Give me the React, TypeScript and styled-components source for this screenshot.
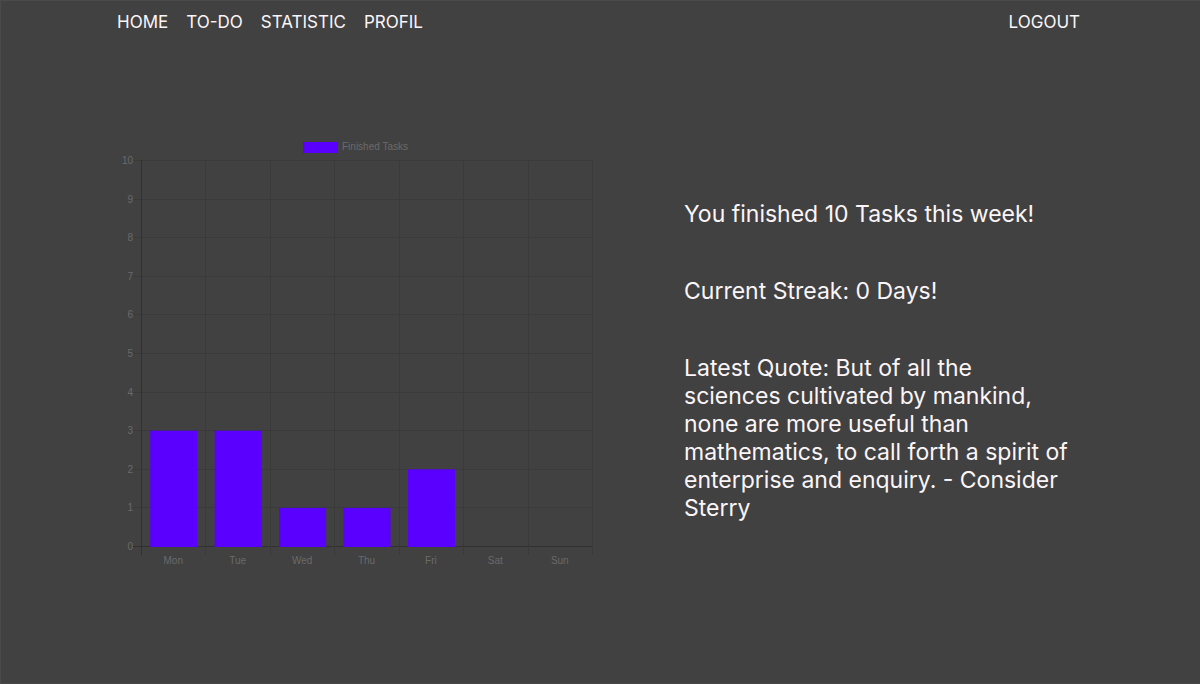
import React from "react";
import styled, { createGlobalStyle } from "styled-components";

const GlobalStyle = createGlobalStyle`
  *, *::before, *::after { box-sizing: border-box; }
  body {
    margin: 0;
    background: #414141;
    color: #fbf5f7;
    font-family: Inter, "Liberation Sans", sans-serif;
    font-weight: 400;
  }
`;

const Page = styled.div`
  min-height: 100vh;
  border: 1px solid #4a4a4a;
  border-right: 0;
  border-bottom-color: #484848;
`;

const Header = styled.header`
  display: flex;
  justify-content: space-between;
  padding: 8px 120px 0 116px;
`;

const Nav = styled.nav`
  display: flex;
  gap: 18px;
`;

const NavLink = styled.a`
  color: inherit;
  font-size: 17px;
  line-height: 26px;
  text-decoration: none;
`;

const LogoutButton = styled.button`
  padding: 0;
  border: 0;
  background: none;
  color: inherit;
  font-family: inherit;
  font-weight: inherit;
  font-size: 17px;
  line-height: 26px;
  cursor: pointer;
`;

const Main = styled.main`
  display: grid;
  grid-template-columns: 40fr 33fr;
  column-gap: 87px;
  align-items: start;
  padding: 102px 120px 0 116px;
`;

const Chart = styled.svg`
  display: block;
  width: 100%;
  height: auto;
  font-family: "Liberation Sans", Arial, sans-serif;
  font-size: 10px;
  font-weight: 400;
  fill: #6a6a6a;
`;

const GridLine = styled.line<{ $axis?: boolean }>`
  stroke: ${({ $axis }) => ($axis ? "#303030" : "#3a3a3a")};
  stroke-width: 1px;
`;

const Bar = styled.rect`
  fill: #5a00ff;
`;

const Summary = styled.section`
  display: flex;
  flex-direction: column;
  gap: 49px;
  max-width: 388px;
  padding-top: 63px;
`;

const SummaryText = styled.p`
  margin: 0;
  font-size: 23px;
  line-height: 28px;
`;

const DAYS = [
  { label: "Mon", done: 3 },
  { label: "Tue", done: 3 },
  { label: "Wed", done: 1 },
  { label: "Thu", done: 1 },
  { label: "Fri", done: 2 },
  { label: "Sat", done: 0 },
  { label: "Sun", done: 0 },
];

const MAX = 10;
const PLOT = { left: 24, top: 23, right: 475, bottom: 409 };
const STEP_X = (PLOT.right - PLOT.left) / DAYS.length;
const STEP_Y = (PLOT.bottom - PLOT.top) / MAX;
const BAR_WIDTH = 47;

const columnX = (i: number) => Math.round(PLOT.left + i * STEP_X) + 0.5;
const valueY = (v: number) => Math.round(PLOT.bottom - v * STEP_Y) + 0.5;

function TaskChart() {
  const values = Array.from({ length: MAX + 1 }, (_, v) => v);
  const columns = Array.from({ length: DAYS.length + 1 }, (_, i) => i);
  return (
    <Chart viewBox="0 0 480 436" role="img" aria-label="Finished tasks per day">
      <Bar x={186} y={5} width={35} height={11} />
      <text x={225} y={13}>Finished Tasks</text>
      {values.map((v) => (
        <React.Fragment key={v}>
          <GridLine $axis={v === 0} x1={16} x2={PLOT.right + 1} y1={valueY(v)} y2={valueY(v)} />
          <text x={16} y={valueY(v) + 3} textAnchor="end">{v}</text>
        </React.Fragment>
      ))}
      {columns.map((i) => (
        <GridLine key={i} $axis={i === 0} x1={columnX(i)} x2={columnX(i)} y1={PLOT.top} y2={PLOT.bottom + 9} />
      ))}
      {DAYS.map(({ label, done }, i) => {
        const center = PLOT.left + (i + 0.5) * STEP_X;
        const height = done * STEP_Y;
        return (
          <React.Fragment key={label}>
            {done > 0 && (
              <Bar
                x={center + 0.5 - BAR_WIDTH / 2}
                y={PLOT.bottom + 0.5 - height}
                width={BAR_WIDTH}
                height={height + 0.5}
              />
            )}
            <text x={center} y={427} textAnchor="middle">{label}</text>
          </React.Fragment>
        );
      })}
    </Chart>
  );
}

export default function App() {
  return (
    <>
      <GlobalStyle />
      <Page>
        <Header>
          <Nav>
            <NavLink href="#home">HOME</NavLink>
            <NavLink href="#todo">TO-DO</NavLink>
            <NavLink href="#statistic">STATISTIC</NavLink>
            <NavLink href="#profil">PROFIL</NavLink>
          </Nav>
          <LogoutButton type="button">LOGOUT</LogoutButton>
        </Header>
        <Main>
          <TaskChart />
          <Summary>
            <SummaryText>You finished 10 Tasks this week!</SummaryText>
            <SummaryText>Current Streak: 0 Days!</SummaryText>
            <SummaryText>
              Latest Quote: But of all the sciences cultivated by mankind, none are more useful than
              mathematics, to call forth a spirit of enterprise and enquiry. - Consider Sterry
            </SummaryText>
          </Summary>
        </Main>
      </Page>
    </>
  );
}
